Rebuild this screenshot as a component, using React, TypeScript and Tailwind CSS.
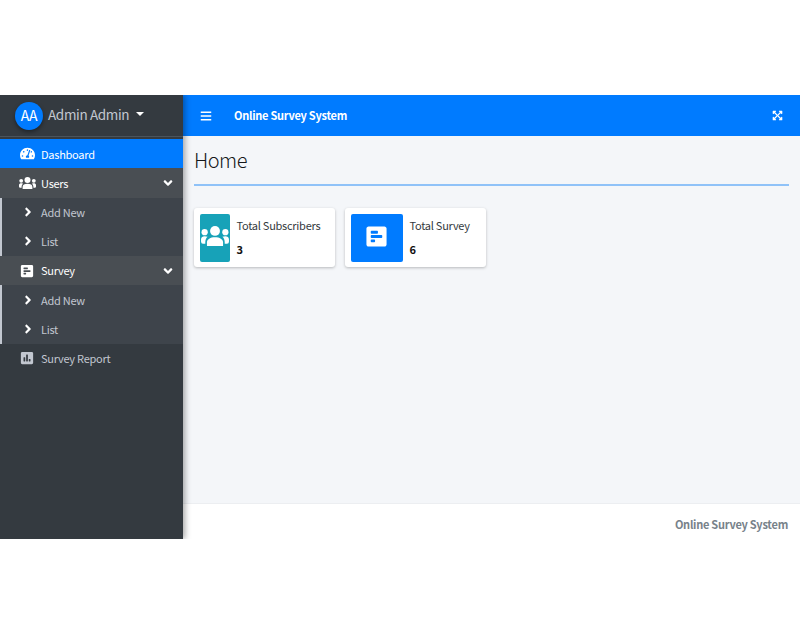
import { FaAngleDown, FaAngleRight, FaBars, FaExpandArrowsAlt, FaPoll, FaPollH, FaTachometerAlt } from "react-icons/fa";
import type { ReactNode } from "react";

const UsersIcon = ({ className }: { className: string }) => (
  <svg viewBox="0 0 85 62" fill="currentColor" className={className}>
    <circle cx="42.5" cy="15" r="15" />
    <circle cx="11" cy="19" r="9.500" />
    <circle cx="74" cy="19" r="9.500" />
    <path d="M18 59v-9c0-10 10-16 24.500-16s24.500 6 24.500 16v9q0 3-3 3H21q-3 0-3-3z" />
    <path d="M0 47v-6c0-7 5-10 11-10 3 0 6 .6 9 2-5 4-7 10-7 17v4H6q-6 0-6-7z" />
    <path d="M85 47v-6c0-7-5-10-11-10-3 0-6 .6-9 2 5 4 7 10 7 17v4h7q6 0 6-7z" />
  </svg>
);

const SubItem = ({ label }: { label: string }) => (
  <div className="flex items-center h-[29.25px] pl-[18.5px] text-[#c2c7d0]">
    <FaAngleRight className="text-white text-[14px] shrink-0" />
    <span className="ml-[6.5px] text-[11px] tracking-[-0.26px]">{label}</span>
  </div>
);

const SubMenu = ({ items }: { items: string[] }) => (
  <div className="bg-[#3e444b] border-l-2 border-[#c2c7d0]">
    {items.map((label) => (
      <SubItem key={label} label={label} />
    ))}
  </div>
);

const ParentItem = ({ icon, label }: { icon: ReactNode; label: string }) => (
  <div className="flex items-center h-[29.25px] bg-[#494e53] pl-[19px] pr-[8px] text-white">
    <span className="w-[16px] flex justify-center">{icon}</span>
    <span className="ml-[6px] text-[11px] tracking-[-0.26px] flex-1">{label}</span>
    <FaAngleDown className="text-[14px]" />
  </div>
);

const StatCard = ({ icon, color, title, value }: { icon: ReactNode; color: string; title: string; value: string }) => (
  <div className="flex bg-white rounded-[3px] shadow-[0_1px_3px_rgba(0,0,0,0.25)] h-[59px] p-[5.5px] w-[141px]">
    <div className={`flex items-center justify-center rounded-[2px] pb-[3px] text-white ${color}`}>{icon}</div>
    <div className="flex flex-col pl-[7px] pt-[3px] text-[11px] tracking-[-0.26px] text-[#343a40]">
      <span className="leading-[16px] whitespace-nowrap">{title}</span>
      <span className="mt-[8px] leading-[16px] font-bold text-[#111]">{value}</span>
    </div>
  </div>
);

const App = () => {
  return (
    <div className="h-[635px] w-[800px] py-[95px] bg-white font-['Noto_Sans_CJK_SC','Noto_Sans',sans-serif] overflow-hidden">
      <div className="flex h-[444px] overflow-hidden">
        <aside className="w-[183px] shrink-0 bg-[#343a40] shadow-[2px_0_6px_rgba(0,0,0,0.35)] z-10">
          <div className="flex items-center h-[42px] pl-[15px] border-b border-[#4b545c]">
            <div className="flex items-center justify-center w-[28px] h-[28px] rounded-full bg-[#007bff] text-white text-[14px] tracking-[-0.3px] shadow-[0_2px_4px_rgba(0,0,0,0.4)]">AA</div>
            <span className="ml-[5px] mb-[2px] text-[13.5px] tracking-[-0.35px] text-[#c2c7d0]">Admin Admin</span>
            <span className="ml-[7px] mb-[3px] w-0 h-0 border-x-[4px] border-x-transparent border-t-[4px] border-t-white" />
          </div>
          <div className="mt-[2px]">
            <div className="flex items-center h-[29.25px] bg-[#007bff] pl-[19px] text-white">
              <span className="w-[16px] flex justify-center"><FaTachometerAlt className="text-[15px]" /></span>
              <span className="ml-[6px] pt-[1px] text-[11px] tracking-[-0.26px]">Dashboard</span>
            </div>
            <ParentItem icon={<UsersIcon className="w-[17px] h-[12.5px] shrink-0" />} label="Users" />
            <SubMenu items={["Add New", "List"]} />
            <ParentItem icon={<FaPollH className="text-[14px]" />} label="Survey" />
            <SubMenu items={["Add New ", "List "]} />
            <div className="flex items-center h-[29.25px] pl-[19px] text-[#c2c7d0]">
              <span className="w-[16px] flex justify-center"><FaPoll className="text-[14px]" /></span>
              <span className="ml-[6px] text-[11px] tracking-[-0.26px]">Survey Report</span>
            </div>
          </div>
        </aside>
        <div className="flex-1 flex flex-col min-w-0 bg-[#f4f6f9]">
          <header className="flex items-center h-[41px] bg-[#007bff] pl-[17px] pr-[17px] text-white">
            <FaBars className="text-[12px]" />
            <span className="ml-[22px] mb-[1px] text-[11px] tracking-[-0.26px] font-bold">Online Survey System</span>
            <FaExpandArrowsAlt className="ml-auto text-[11px]" />
          </header>
          <main className="flex-1 px-[11px]">
            <h1 className="text-[20px] tracking-[-0.5px] leading-[24px] pt-[12px] pb-[12px] text-[#14171a] font-light">Home</h1>
            <div className="h-[2px] bg-[#8fc2f8]" />
            <div className="flex gap-[10px] mt-[22px]">
              <StatCard icon={<UsersIcon className="w-[28px] h-[20.4px] shrink-0" />} color="bg-[#17a2b8] w-[30px]" title="Total Subscribers" value="3" />
              <StatCard icon={<FaPollH className="text-[23px]" />} color="bg-[#007bff] w-[52px]" title="Total Survey" value="6" />
            </div>
          </main>
          <footer className="flex items-center justify-end h-[36px] pt-[5px] bg-white border-t border-[#eceef1] pr-[12px] text-[11px] tracking-[-0.26px] font-bold text-[#78828a]">
            Online Survey System
          </footer>
        </div>
      </div>
    </div>
  );
};

export default App;
